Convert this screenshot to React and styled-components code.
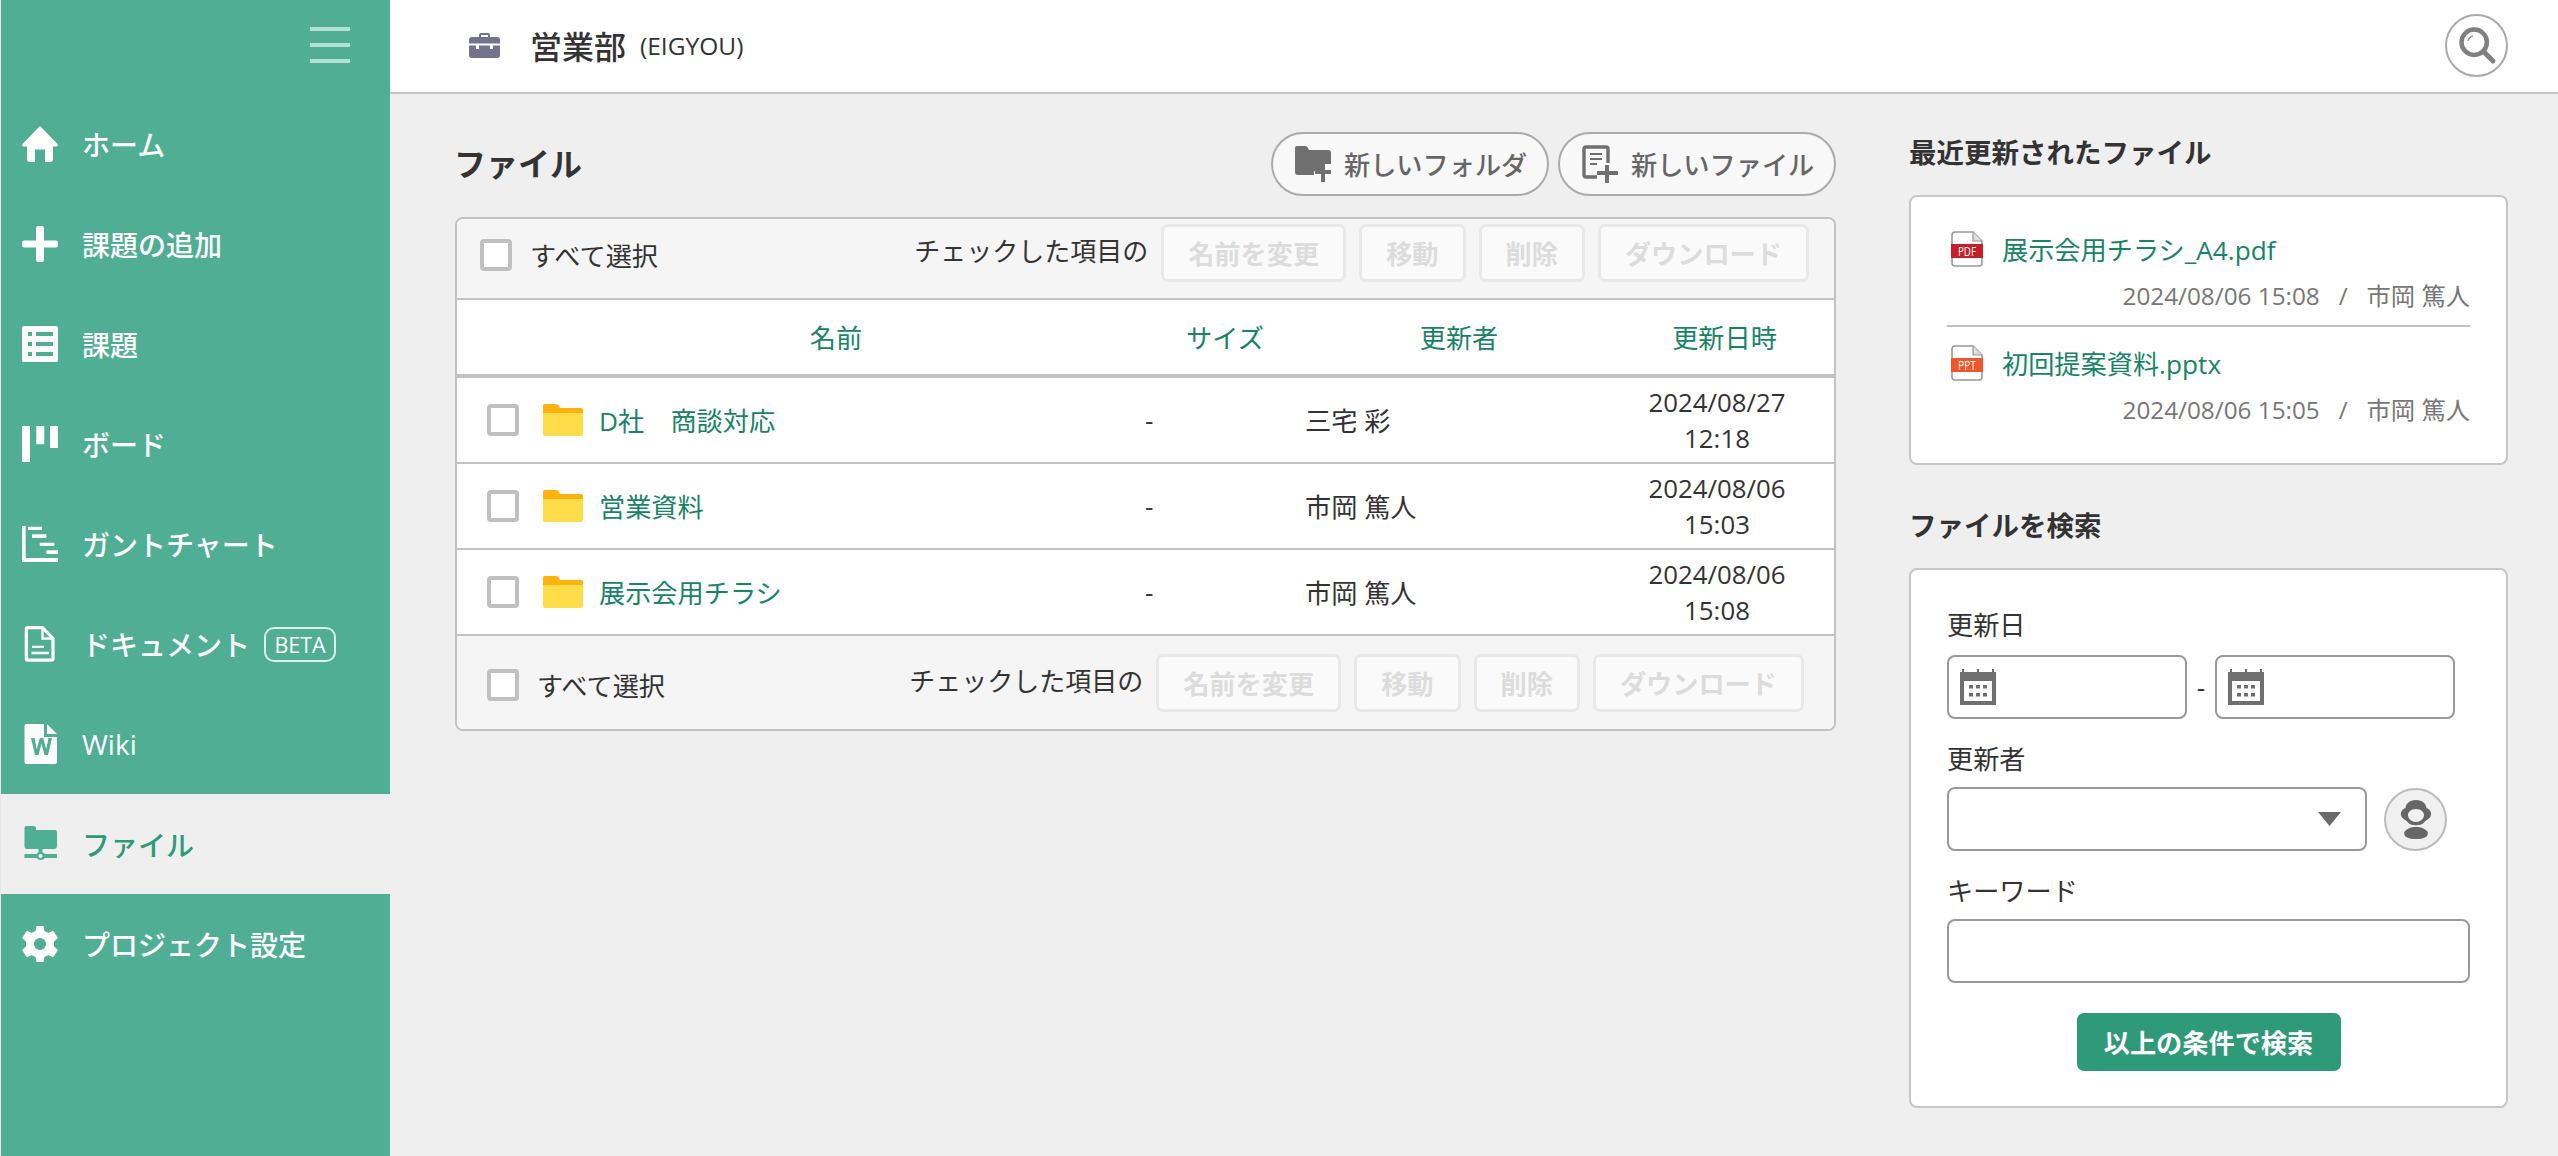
import React from 'react';
import styled, { createGlobalStyle } from 'styled-components';

const FONT = '"Open Sans", "Noto Sans CJK JP", sans-serif';

const Global = createGlobalStyle`
  html, body { margin: 0; padding: 0; height: 100%; background: #efefef; overflow: hidden; }
  body { font-family: ${FONT}; font-size: 26.2px; color: #333; }
  * { box-sizing: border-box; }
`;

const Page = styled.div`display: flex; width: 2558px; height: 1156px; background: #efefef;`;
const Sidebar = styled.nav`width: 390px; flex: none; background: #4fae93; border-left: 1px solid #e8e8e8; display: flex; flex-direction: column; position: relative;`;
const MenuToggle = styled.div`height: 94px; padding: 27px 40px 0 0; display: flex; flex-direction: column; align-items: flex-end; gap: 12px;`;
const ToggleBar = styled.span`display: block; width: 40px; height: 4px; background: #b6e0d2;`;
const NavItem = styled.a`
  height: 100px; display: flex; align-items: center; gap: 24px; padding-left: 21px;
  font-size: 28px; font-weight: 500;
  color: ${p => (p.$active ? '#2e9a78' : '#fff')};
  background: ${p => (p.$active ? '#efefef' : 'transparent')};
  svg { width: 36px; height: auto; flex: none; }
`;
const Beta = styled.span`width: 72px; height: 35px; margin-left: -10px; border: 2px solid #d8f0e8; border-radius: 10px; font-size: 21.5px; font-weight: 400; display: flex; align-items: center; justify-content: center;`;

const Content = styled.div`flex: 1; display: flex; flex-direction: column; min-width: 0;`;
const Header = styled.header`height: 94px; background: #fff; border-bottom: 2px solid #c4c4c4; display: flex; align-items: center; padding: 0 50px 2px 79px;`;
const ProjectName = styled.span`font-size: 32px; font-weight: 500; margin-left: 30px; color: #333;`;
const ProjectKey = styled.span`font-size: 24.5px; font-weight: 500; margin-left: 14px; color: #333;`;
const SearchCircle = styled.button`margin-left: auto; width: 63px; height: 63px; padding: 0; border-radius: 50%; border: 2px solid #aaa; background: #fff; display: flex; align-items: center; justify-content: center;`;

const Body = styled.div`flex: 1; display: flex; padding: 38px 0 0 65px; gap: 73px;`;
const FilesCol = styled.main`width: 1381px; flex: none;`;
const TitleRow = styled.div`display: flex; align-items: center; height: 64px; margin-bottom: 21px; gap: 9px;`;
const PageTitle = styled.h1`margin: 0 auto 0 -1px; font-size: 32px; font-weight: 700; color: #333; line-height: 1.2;`;
const NewButton = styled.button`
  width: 278px; height: 64px; border-radius: 32px; border: 2px solid #aaa; background: #f8f8f8;
  display: flex; align-items: center; padding: 0 0 0 22px; gap: 13px;
  font: 500 26.2px ${FONT}; color: #666;
  svg { flex: none; }
`;

const Table = styled.section`border: 2px solid #c2c2c2; border-radius: 8px; overflow: hidden; background: #fff;`;
const Toolbar = styled.div`
  display: flex; align-items: flex-start; background: #f5f5f5;
  padding: ${p => (p.$bottom ? '18px 30px 0 30px' : '5px 25px 0 23px')};
  height: ${p => (p.$bottom ? '93px' : '81px')};
  border-bottom: ${p => (p.$bottom ? 'none' : '2px solid #c2c2c2')};
`;
const SelectAll = styled.label`display: flex; align-items: center; gap: 18px; margin-top: 15px; height: 32px; color: #333;`;
const Check = styled.span`display: block; flex: none; width: 32px; height: 32px; border: 4px solid #c0c0c0; border-radius: 4px; background: #fff;`;
const Actions = styled.div`margin-left: auto; display: flex; align-items: center; gap: 13px;`;
const ActionLabel = styled.span`padding-bottom: 6px; color: #333; font-size: 26px;`;
const ActionButton = styled.button`
  height: 58px; padding: 0 24px; border: 3px solid #e8e8e8; border-radius: 7px; background: #fafafa;
  font: 700 26.2px ${FONT}; color: #dcdcdc; white-space: nowrap;
`;
const HeadRow = styled.div`
  display: grid; grid-template-columns: 711px 110px 358px 173px; height: 74px; align-items: center;
  border-bottom: 4px solid #c2c2c2; box-sizing: content-box; background: #fff;
  padding-left: 2px; text-align: center; color: #178467;
`;
const NameHead = styled.div`padding-left: 43px;`;
const Row = styled.div`
  display: grid; grid-template-columns: 658px 160px 335px 154px; height: 86px; align-items: center;
  padding-left: 30px; border-bottom: 2px solid #c2c2c2; background: #fff; color: #333;
`;
const NameCell = styled.div`display: flex; align-items: center;`;
const FolderLink = styled.a`color: #178467; margin-left: 16px; white-space: pre;`;
const RowFolder = styled.svg`width: 40px; height: 32px; margin-left: 24px; flex: none;`;
const DateCell = styled.div`text-align: center; line-height: 36px; font-size: 25.8px;`;

const Side = styled.aside`width: 599px; flex: none;`;
const SideTitle = styled.h2`margin: ${p => (p.$second ? '40px' : '0')} 0 21px; height: 42px; line-height: 42px; font-size: 27.5px; font-weight: 700; color: #333;`;
const Card = styled.section`border: 2px solid #c6c6c6; border-radius: 8px; background: #fff;`;
const RecentCard = styled(Card)`padding: 16px 36px 22px;`;
const RecentItem = styled.div`padding: 16px 0 11px; border-bottom: ${p => (p.$last ? 'none' : '2px solid #c0c0c0')}; height: 114px;`;
const RecentTitle = styled.div`display: flex; align-items: center; height: 40px; padding-left: 4px; gap: 19px; color: #178467; svg { flex: none; }`;
const RecentMeta = styled.div`margin-top: 9px; line-height: 36px; text-align: right; font-size: 24.3px; color: #777; white-space: pre;`;
const SearchCard = styled(Card)`padding: 37px 36px 35px;`;
const FieldLabel = styled.div`line-height: 36px; margin: ${p => (p.$first ? '0 0 12px' : '22px 0 10px')}; color: #333;`;
const DateRow = styled.div`display: flex; align-items: center;`;
const Dash = styled.span`width: 28px; text-align: center; flex: none;`;
const FieldBox = styled.div`
  height: 64px; flex: none; width: ${p => p.$w}px; border: 2px solid #999; border-radius: 8px; background: #fff;
  display: flex; align-items: center; padding: 0 11px; 
`;
const TextField = styled.input`display: block; width: 100%; height: 64px; border: 2px solid #999; border-radius: 8px; background: #fff; padding: 0 12px; font: inherit; outline: none;`;
const PickerRow = styled.div`display: flex; align-items: center; gap: 17px;`;
const SelectBox = styled(FieldBox)`justify-content: flex-end; padding: 0 24px 0 0;`;
const PickerCircle = styled.div`width: 63px; height: 63px; border-radius: 50%; border: 2px solid #bbb; background: #f0f0f0; display: flex; align-items: center; justify-content: center; flex: none;`;
const SubmitRow = styled.div`margin-top: 30px; display: flex; justify-content: center;`;
const Submit = styled.button`width: 264px; height: 58px; border: none; border-radius: 7px; background: #2e9a78; color: #fff; font: 700 26.2px ${FONT}; padding: 0; white-space: nowrap;`;

const I = ({ children, v = '0 0 36 36', c = '#fff' }) => (
  <svg viewBox={v} fill={c} xmlns="http://www.w3.org/2000/svg">{children}</svg>
);
const HomeIcon = () => <I><path d="M18 0 L35.5 18 Q36.6 20.5 33.5 20.5 H31 V33 Q31 36 28 36 H23 V23.5 H13 V36 H8 Q5 36 5 33 V20.5 H2.5 Q-.6 20.5 .5 18 Z" /></I>;
const PlusIcon = () => <I><path d="M14 2 Q14 0 16 0 H20 Q22 0 22 2 V14.5 H34 Q36 14.5 36 16.5 V19.5 Q36 21.5 34 21.5 H22 V34 Q22 36 20 36 H16 Q14 36 14 34 V21.5 H2 Q0 21.5 0 19.5 V16.5 Q0 14.5 2 14.5 H14 Z" /></I>;
const ListIcon = () => <I><path fillRule="evenodd" d="M1.5 0 H34.5 Q36 0 36 1.5 V34.5 Q36 36 34.5 36 H1.5 Q0 36 0 34.5 V1.5 Q0 0 1.5 0 Z M6 6 V10 H10 V6 Z M14 6 V10 H31 V6 Z M6 16 V20 H10 V16 Z M14 16 V20 H31 V16 Z M6 26 V30 H10 V26 Z M14 26 V30 H31 V26 Z" /></I>;
const BoardIcon = () => <I><path d="M0 0 H8 V36 H0 Z M14.3 0 H22.3 V18.3 H14.3 Z M28 0 H36 V22 H28 Z" /></I>;
const GanttIcon = () => <I><path d="M0 0 H3.7 V32 H36 V36 H0 Z M6 .7 H20 V4 H6 Z M10 8.3 H24.3 V12 H10 Z M17.7 16.7 H32.3 V20 H17.7 Z M24.3 24.3 H36 V28 H24.3 Z" /></I>;
const DocIcon = () => (
  <svg viewBox="0 0 36 36" fill="none" stroke="#fff" xmlns="http://www.w3.org/2000/svg">
    <path d="M6 1.7 H20.5 L31 12.5 V32.5 Q31 34.2 29.3 34.2 H6 Q4.3 34.2 4.3 32.5 V3.4 Q4.3 1.7 6 1.7 Z" strokeWidth="3.2" strokeLinejoin="round" />
    <path d="M20.5 1.7 V12.5 H31" strokeWidth="2.4" />
    <path d="M10 20.8 H22" strokeWidth="2.2" />
    <path d="M9.5 27 H27" strokeWidth="2.6" />
  </svg>
);
const WikiIcon = () => (
  <I v="0 0 36 40">
    <path fillRule="evenodd" d="M4 0 H22 V13 H35 V38 Q35 40 33 40 H4 Q2.5 40 2.5 38 V2 Q2.5 0 4 0 Z M9 14 L13 31 H16.5 L19.5 19.5 L22.5 31 H26 L30 14 H26.5 L24.2 25 L21.2 14 H17.8 L14.8 25 L12.5 14 Z" />
    <path d="M25 0 L35 10 H25 Z" />
  </I>
);
const FileNetIcon = () => <I c="#4fae93"><path d="M4 0 H12 Q14 0 14 2 V4 H33 Q35 4 35 6 V20 Q35 23 32 23 H5 Q2.5 23 2.5 20 V2 Q2.5 0 4 0 Z M16.5 23 H20.5 V26.5 A5 5 0 0 1 23 28 H35 V32 H23 A5.5 5.5 0 0 1 14.5 32 H2.5 V28 H14.5 A5 5 0 0 1 16.5 26.5 Z" /><circle cx="18.5" cy="30" r="2" fill="#efefef" /></I>;
const GearIcon = () => <I><path fillRule="evenodd" d="M14.5 0 H21.5 L22.5 5 L26.5 7 L31 4.5 L36 12 L32 15.5 V20.5 L36 24 L31 31.5 L26.5 29 L22.5 31 L21.5 36 H14.5 L13.5 31 L9.5 29 L5 31.5 L0 24 L4 20.5 V15.5 L0 12 L5 4.5 L9.5 7 L13.5 5 Z M18 12 A6 6 0 1 0 18 24 A6 6 0 1 0 18 12 Z" /></I>;
const BriefcaseIcon = () => (
  <svg width="31" height="25" viewBox="0 0 31 25" fill="#73738f"><path fillRule="evenodd" d="M10 4 V2 Q10 0 12 0 H19 Q21 0 21 2 V4 H28 Q31 4 31 7 V22 Q31 25 28 25 H3 Q0 25 0 22 V7 Q0 4 3 4 Z M12 2 V4 H19 V2 Z M0 10.5 V12.5 H7 V16 H10 V12.5 H21 V16 H24 V12.5 H31 V10.5 Z" /></svg>
);
const SearchIcon = () => (
  <svg width="40" height="40" viewBox="0 0 40 40" fill="none"><circle cx="17.2" cy="17.2" r="12.7" stroke="#808080" strokeWidth="4.5" /><path d="M26.5 26.5 L36 36" stroke="#808080" strokeWidth="5" strokeLinecap="round" /><path d="M11 16 A6.5 6.5 0 0 1 16 11" stroke="#999" strokeWidth="1.6" /></svg>
);
const NewFolderIcon = () => (
  <svg width="36" height="36" viewBox="0 0 36 36" fill="#6f6f6f"><path d="M0 2 Q0 0 2 0 H10 Q12 0 13 2 L14 4 H33 Q36 4 36 7 V18 H26 V25 H19 V29 H3 Q0 29 0 26 Z" /><path d="M26 18 H30 V24 H36 V28 H30 V36 H26 V28 H20 V24 H26 Z" /></svg>
);
const NewFileIcon = () => (
  <svg width="36" height="38" viewBox="0 0 36 38" fill="none"><path d="M15 32 H4 Q2 32 2 30 V4 Q2 2 4 2 H24 Q26 2 26 4 V18" stroke="#6f6f6f" strokeWidth="3.4" /><path d="M8 9 H20 M8 14 H20 M8 19 H15" stroke="#6f6f6f" strokeWidth="2" /><path d="M23 20 H27 V26 H36 V30 H27 V38 H23 V30 H15 V26 H23 Z" fill="#6f6f6f" /></svg>
);
const FolderIcon = () => (
  <RowFolder viewBox="0 0 40 32"><path d="M0 2 Q0 0 2 0 H13 Q15 0 16 2 L17 4 H38 Q40 4 40 6 V10 H0 Z" fill="#ffb20d" /><path d="M0 9 H40 V30 Q40 32 38 32 H2 Q0 32 0 30 Z" fill="#ffdc4a" /></RowFolder>
);
const DocBadge = ({ color, label }) => (
  <svg width="32" height="36" viewBox="0 0 32 36"><path d="M4 1 H22 L31 10 V32 Q31 35 28 35 H4 Q1 35 1 32 V4 Q1 1 4 1 Z" fill="#fff" stroke="#999" strokeWidth="1.6" /><path d="M22 1 V10 H31" fill="#ddd" stroke="#999" strokeWidth="1.2" /><rect x="0" y="13" width="32" height="14" fill={color} /><text x="16" y="25" textAnchor="middle" fontSize="13" textLength="18" lengthAdjust="spacingAndGlyphs" fill="#fff" fontFamily="Open Sans">{label}</text></svg>
);
const CalIcon = () => (
  <svg width="36" height="36" viewBox="0 0 36 36" fill="#6f6f6f"><path fillRule="evenodd" d="M0 3 H2 V0 H4 V3 H17 V0 H19 V3 H32 V0 H34 V3 H36 V36 H0 Z M4 12 V32 H32 V12 Z" /><path d="M9 16 h4 v3.5 h-4 Z M16 16 h4 v3.5 h-4 Z M23 16 h4 v3.5 h-4 Z M9 24 h4 v3.5 h-4 Z M16 24 h4 v3.5 h-4 Z M23 24 h4 v3.5 h-4 Z" /></svg>
);
const Arrow = () => <svg width="23" height="14" viewBox="0 0 23 14" fill="#6a6a6a"><path d="M0 0 H23 L11.5 14 Z" /></svg>;
const AvatarIcon = () => (
  <svg width="38" height="40" viewBox="0 0 38 40" fill="#666"><path fillRule="evenodd" d="M19 1 C26 1 29 5 29.5 9 C34 10.500 36 16 32 19.500 C30 21 28 22 26.500 24 C24 27 14 27 11.500 24 C10 22 8 21 6 19.500 C2 16 4 10.500 8.500 9 C9 5 12 1 19 1 Z M19 10 C14 10 11 13 11 16 C11 20 15 23 19 23 C23 23 27 20 27 16 C27 13 24 10 19 10 Z" /><path d="M7 34 C9 29 15 28 19 28 C23 28 29 29 31 34 Q31 40 19 40 Q7 40 7 34 Z" /></svg>
);

const nav = [
  ['ホーム', <HomeIcon />], ['課題の追加', <PlusIcon />], ['課題', <ListIcon />], ['ボード', <BoardIcon />],
  ['ガントチャート', <GanttIcon />], ['ドキュメント', <DocIcon />, true], ['Wiki', <WikiIcon />],
  ['ファイル', <FileNetIcon />, false, true], ['プロジェクト設定', <GearIcon />],
];
const rows = [
  ['D社　商談対応', '三宅 彩', '2024/08/27', '12:18'],
  ['営業資料', '市岡 篤人', '2024/08/06', '15:03'],
  ['展示会用チラシ', '市岡 篤人', '2024/08/06', '15:08'],
];

const ToolbarRow = ({ bottom }) => (
  <Toolbar $bottom={bottom}>
    <SelectAll><Check />すべて選択</SelectAll>
    <Actions>
      <ActionLabel>チェックした項目の</ActionLabel>
      {['名前を変更', '移動', '削除', 'ダウンロード'].map(t => <ActionButton key={t}>{t}</ActionButton>)}
    </Actions>
  </Toolbar>
);

export default function App() {
  return (
    <Page>
      <Global />
      <Sidebar>
        <MenuToggle><ToggleBar /><ToggleBar /><ToggleBar /></MenuToggle>
        {nav.map(([label, icon, beta, active]) => (
          <NavItem key={label} $active={active}>{icon}{label}{beta && <Beta>BETA</Beta>}</NavItem>
        ))}
      </Sidebar>
      <Content>
        <Header>
          <BriefcaseIcon />
          <ProjectName>営業部</ProjectName>
          <ProjectKey>(EIGYOU)</ProjectKey>
          <SearchCircle aria-label="検索"><SearchIcon /></SearchCircle>
        </Header>
        <Body>
          <FilesCol>
            <TitleRow>
              <PageTitle>ファイル</PageTitle>
              <NewButton><NewFolderIcon />新しいフォルダ</NewButton>
              <NewButton><NewFileIcon />新しいファイル</NewButton>
            </TitleRow>
            <Table>
              <ToolbarRow />
              <HeadRow><NameHead>名前</NameHead><div>サイズ</div><div>更新者</div><div>更新日時</div></HeadRow>
              {rows.map(([name, user, d, t]) => (
                <Row key={name}>
                  <NameCell><Check /><FolderIcon /><FolderLink>{name}</FolderLink></NameCell>
                  <div>-</div>
                  <div>{user}</div>
                  <DateCell>{d}<br />{t}</DateCell>
                </Row>
              ))}
              <ToolbarRow bottom />
            </Table>
          </FilesCol>
          <Side>
            <SideTitle>最近更新されたファイル</SideTitle>
            <RecentCard>
              <RecentItem>
                <RecentTitle><DocBadge color="#c62026" label="PDF" />展示会用チラシ_A4.pdf</RecentTitle>
                <RecentMeta>2024/08/06 15:08   /   市岡 篤人</RecentMeta>
              </RecentItem>
              <RecentItem $last>
                <RecentTitle><DocBadge color="#f0562a" label="PPT" />初回提案資料.pptx</RecentTitle>
                <RecentMeta>2024/08/06 15:05   /   市岡 篤人</RecentMeta>
              </RecentItem>
            </RecentCard>
            <SideTitle $second>ファイルを検索</SideTitle>
            <SearchCard>
              <FieldLabel $first>更新日</FieldLabel>
              <DateRow>
                <FieldBox $w={240}><CalIcon /></FieldBox>
                <Dash>-</Dash>
                <FieldBox $w={240}><CalIcon /></FieldBox>
              </DateRow>
              <FieldLabel>更新者</FieldLabel>
              <PickerRow>
                <SelectBox $w={420}><Arrow /></SelectBox>
                <PickerCircle><AvatarIcon /></PickerCircle>
              </PickerRow>
              <FieldLabel>キーワード</FieldLabel>
              <TextField />
              <SubmitRow><Submit>以上の条件で検索</Submit></SubmitRow>
            </SearchCard>
          </Side>
        </Body>
      </Content>
    </Page>
  );
}
